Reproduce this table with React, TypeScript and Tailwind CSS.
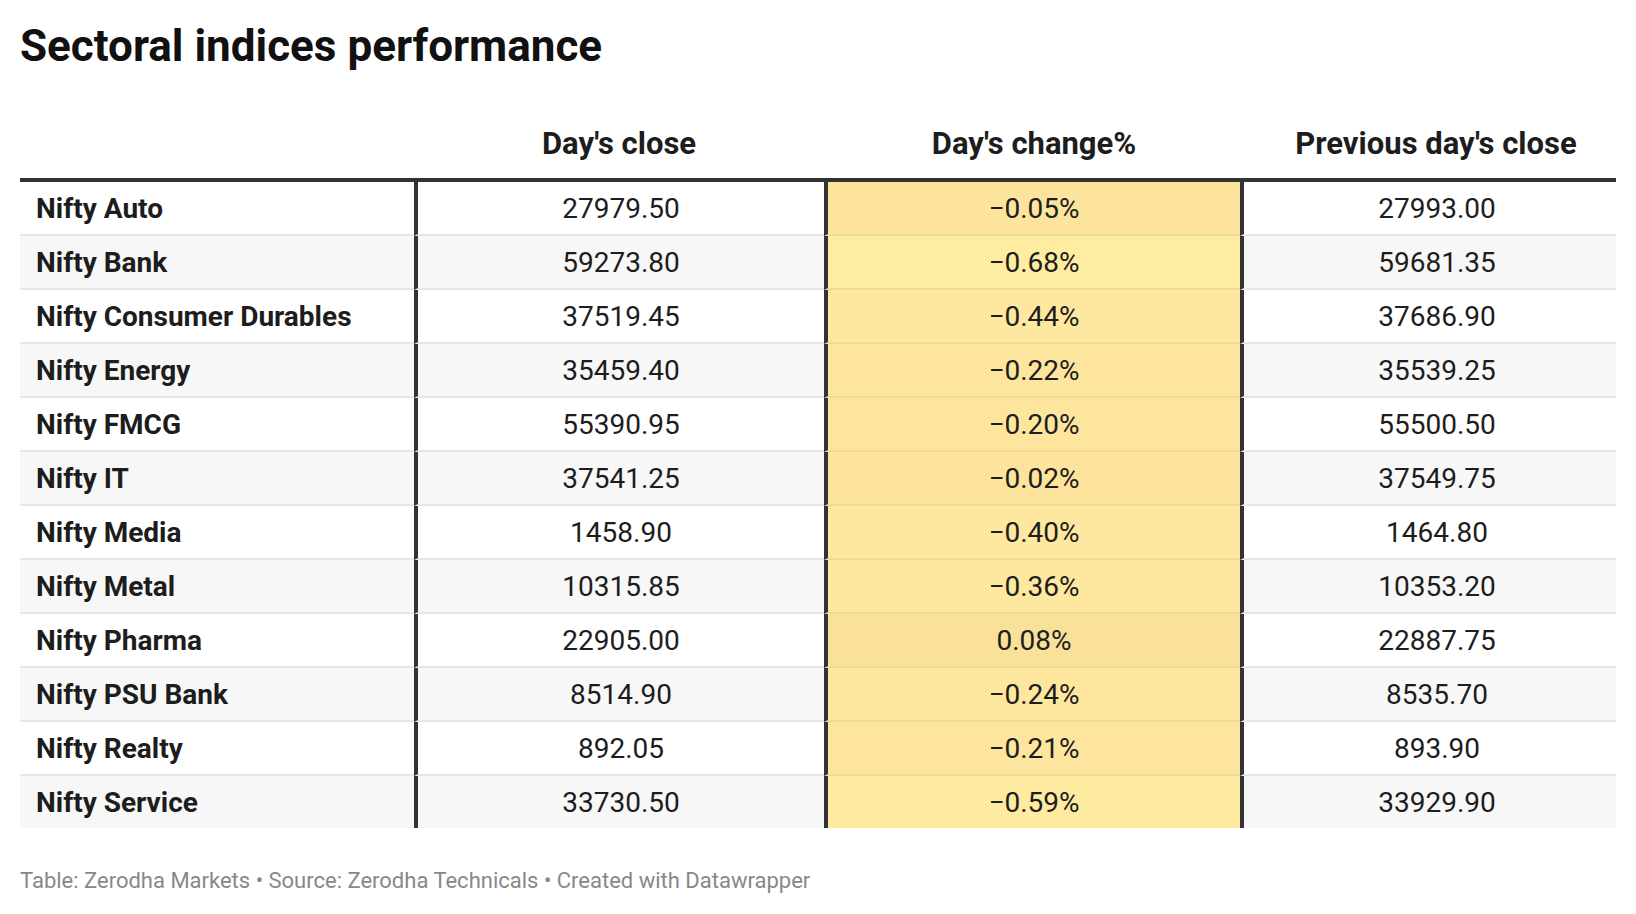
const rows = [
  { name: "Nifty Auto", close: "27979.50", change: "−0.05%", prev: "27993.00", heat: "bg-[#fde49d]" },
  { name: "Nifty Bank", close: "59273.80", change: "−0.68%", prev: "59681.35", heat: "bg-[#feeca1]" },
  { name: "Nifty Consumer Durables", close: "37519.45", change: "−0.44%", prev: "37686.90", heat: "bg-[#fee89f]" },
  { name: "Nifty Energy", close: "35459.40", change: "−0.22%", prev: "35539.25", heat: "bg-[#fde59d]" },
  { name: "Nifty FMCG", close: "55390.95", change: "−0.20%", prev: "55500.50", heat: "bg-[#fde59d]" },
  { name: "Nifty IT", close: "37541.25", change: "−0.02%", prev: "37549.75", heat: "bg-[#fde39c]" },
  { name: "Nifty Media", close: "1458.90", change: "−0.40%", prev: "1464.80", heat: "bg-[#fee89f]" },
  { name: "Nifty Metal", close: "10315.85", change: "−0.36%", prev: "10353.20", heat: "bg-[#fee79f]" },
  { name: "Nifty Pharma", close: "22905.00", change: "0.08%", prev: "22887.75", heat: "bg-[#f9e19a]" },
  { name: "Nifty PSU Bank", close: "8514.90", change: "−0.24%", prev: "8535.70", heat: "bg-[#fde69e]" },
  { name: "Nifty Realty", close: "892.05", change: "−0.21%", prev: "893.90", heat: "bg-[#fde59d]" },
  { name: "Nifty Service", close: "33730.50", change: "−0.59%", prev: "33929.90", heat: "bg-[#feeba0]" },
];

export default function App() {
  return (
    <div className="min-h-[914px] bg-white px-5 pt-5 font-['Roboto',sans-serif] text-[#1d1d1d]">
      <h1 className="text-[44px] font-bold leading-[52px] text-[#111]">Sectoral indices performance</h1>

      <div className="grid h-[110px] grid-cols-[394px_410px_416px_376px] items-end border-b-4 border-[#333] pb-[16px] text-[31px] font-bold leading-[36px]">
        <span />
        <span className="text-center">Day's close</span>
        <span className="pl-1 text-center">Day's change%</span>
        <span className="pl-[16px] text-center">Previous day's close</span>
      </div>

      <div>
        {rows.map((r, i) => (
          <div
            key={r.name}
            className={
              "grid grid-cols-[394px_410px_416px_376px] text-[28px] " +
              (i % 2 === 1 ? "bg-[#f7f7f7]" : "bg-white")
            }
          >
            <div className={"flex items-center pl-[16px] pt-[2px] font-bold " + (i < rows.length - 1 ? "h-[54px] border-b-2 border-[#e6e6e6]" : "h-[52px]")}>
              {r.name}
            </div>
            <div className={"flex items-center justify-center border-l-4 border-l-[#333] pt-[2px] " + (i < rows.length - 1 ? "h-[54px] border-b-2 border-b-[#e6e6e6]" : "h-[52px]")}>
              {r.close}
            </div>
            <div className={"flex items-center justify-center border-l-4 border-l-[#333] pt-[2px] " + r.heat + " " + (i < rows.length - 1 ? "h-[54px] border-b-2 border-b-[#eddc98]" : "h-[52px]")}>
              {r.change}
            </div>
            <div className={"flex items-center justify-center border-l-4 border-l-[#333] pl-[14px] pt-[2px] " + (i < rows.length - 1 ? "h-[54px] border-b-2 border-b-[#e6e6e6]" : "h-[52px]")}>
              {r.prev}
            </div>
          </div>
        ))}
      </div>

      <p className="mt-[40px] text-[22px] leading-[26px] text-[#888]">
        Table: Zerodha Markets • Source: Zerodha Technicals • Created with Datawrapper
      </p>
    </div>
  );
}
